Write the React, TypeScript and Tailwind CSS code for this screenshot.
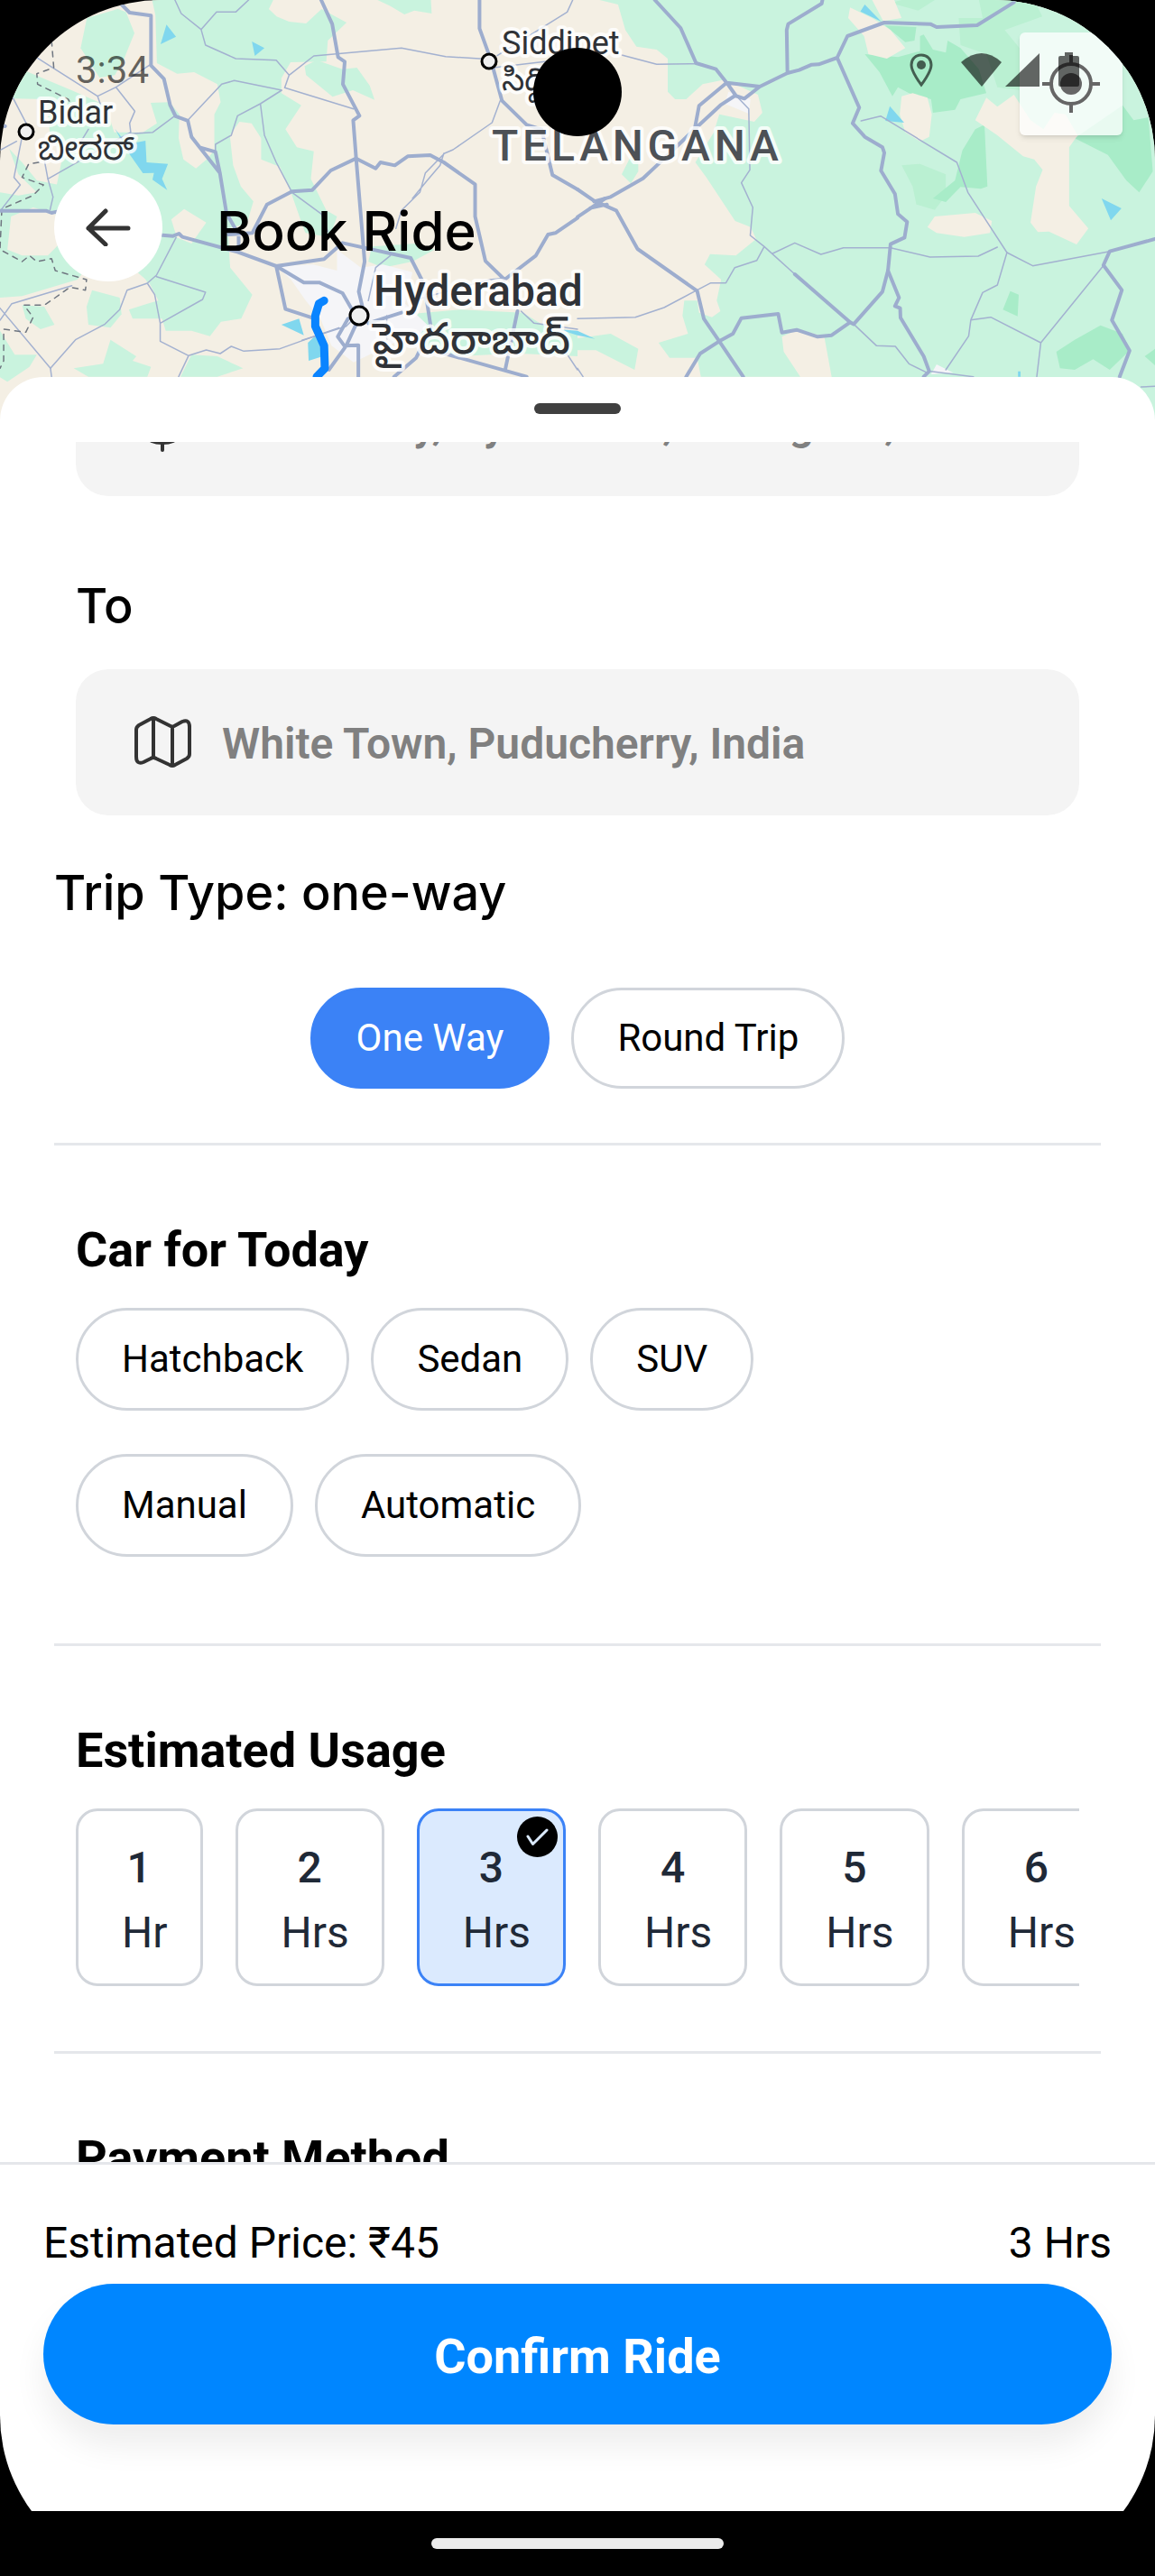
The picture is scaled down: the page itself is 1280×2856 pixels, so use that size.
import { ReactNode, useState } from "react";

const halo = "stroke-white/80 [paint-order:stroke] [stroke-width:8px] [stroke-linejoin:round]";
const indic = "font-['Noto_Sans_Kannada','Noto_Sans_Telugu','Noto_Sans',Roboto,sans-serif]";

function Fill({ d, className }: { d: string; className: string }) {
  return <path d={d} className={className} />;
}

function Road({ d, className }: { d: string; className: string }) {
  return (
    <path d={d} fill="none" strokeLinejoin="round" strokeLinecap="round" vectorEffect="non-scaling-stroke" className={className} />
  );
}

const major = "stroke-[#9dadce] [stroke-width:4px]";
const minor = "stroke-[#a3b1d0] [stroke-width:1.5px]";
const border = "stroke-[#6f7680] [stroke-width:1.5px] [stroke-dasharray:6_6]";
const green = "fill-[#c9f3de]";
const forest = "fill-[#a8ecc8]";
const water = "fill-[#80d7ee]";
const land = "fill-[#f4efe4]";
const town = "fill-[#f5f5f8]";

function WestMap() {
  return (
    <g transform="scale(0.408163 0.333333)">
      <Fill className={green} d="M236,60 L320,30 342,40 365,110 337,195 312,250 270,258 219,160Z" />
      <Fill className={green} d="M413,0 L742,0 730,30 751,55 785,72 831,78 873,30 941,75 890,135 886,205 789,207 764,260 764,310 818,350 775,430 806,490 852,503 844,595 886,700 915,720 895,790 830,775 760,660 670,745 620,760 625,890 685,980 655,1060 600,1070 570,1118 520,1100 450,1100 440,1060 360,1060 350,1030 400,1010 430,1000 405,940 340,870 250,815 190,700 150,640 170,520 135,440 127,330 34,328 67,235 194,300 287,350 310,440 388,440 426,410 409,342 460,340 487,380 485,460 498,530 532,560 561,530 582,500 582,380 599,340 590,280 527,240 481,245 426,210 422,50Z" />
      <Fill className={land} d="M650,405 L683,410 709,460 709,530 760,555 790,640 830,780 720,790 625,890 620,760 670,745 688,670 654,620 633,550 624,450Z" />
      <Fill className={green} d="M860,200 L930,230 969,225 1004,285 1017,332 958,300 903,322 831,250 827,220Z" />
      <Fill className={green} d="M25,495 L60,540 100,600 160,615 180,650 150,760 230,900 210,930 60,985 0,990 0,640 50,650 100,640 50,580Z" />
      <Fill className={land} d="M30,720 L90,690 150,710 170,800 130,850 60,850 20,830Z" />
      <Fill className={land} d="M465,730 L500,695 560,740 520,810 480,790Z" />
      <Fill className={green} d="M250,965 L325,990 330,1045 300,1090 240,1080 235,1020Z" />
      <Fill className={green} d="M60,1015 L120,1020 148,1080 110,1095 70,1060Z" />
      <Fill className={green} d="M0,1100 L40,1180 100,1180 80,1220 20,1270 0,1255Z" />
      <Fill className={green} d="M300,1130 L370,1185 360,1200 410,1220 400,1253 240,1253 200,1225 280,1210Z" />
      <Fill className={green} d="M520,1180 L590,1185 660,1225 590,1253 490,1253Z" />
      <Fill className={green} d="M380,890 L430,870 480,910 470,930 400,940Z" />
      <Fill className={green} d="M1025,0 L1170,0 1172,45 1125,35 1098,48 1060,20Z" />
      <Fill className={green} d="M1010,820 L1130,810 1180,830 1120,870 1040,890 1000,870Z" />
      <Fill className={green} d="M1110,1045 L1250,1030 1420,1040 1500,1100 1568,1110 1568,1185 1400,1175 1240,1185 1090,1130 1100,1070Z" />
      <Fill className={town} d="M915,830 L980,890 1040,880 1120,905 1100,1010 1160,1080 1130,1130 1070,1140 960,1205 900,1150 870,1060 830,1000 790,930 750,885 850,880 915,900Z" />
      <Fill className={water} d="M452,82 L478,122 436,147Z M684,138 L718,160 692,186Z M312,428 L345,480 395,468 398,540 456,545 440,595 454,632 414,598 418,575 388,576 350,510Z M764,1080 L812,1060 825,1115Z M836,1140 L870,1100 890,1180 838,1200Z M1515,1095 L1568,1100 1568,1115Z" />

      <Road className={minor} d="M475,0 L492,45 546,98 588,40 640,40 675,0 M546,98 L558,150 640,195 750,200 785,250 773,292 960,362 M785,250 L852,186 1090,160 1210,188 1330,197 M1340,225 L1480,205 M1350,185 L1540,40 1555,0" />
      <Road className={minor} d="M510,400 L602,280 636,268 765,300 707,345 645,385 628,450 585,480 585,505 M707,345 L718,450 750,540 793,640 873,712 890,770" />
      <Road className={minor} d="M98,190 L265,320 315,290 366,370 352,410 355,440 310,470 130,595 M315,290 L408,215 M265,320 L275,355 M355,445 L415,440 475,385" />
      <Road className={minor} d="M35,325 L72,412 M60,455 L38,590 55,615 5,695 M120,530 L130,595 144,655 136,697 M0,500 L45,470 M240,430 L210,490" />
      <Road className={minor} d="M478,790 L425,915 400,942 345,965 325,1030 285,1078 205,1130 137,1225 140,1253 M400,942 L420,980 435,1075 435,1135 512,1183 485,1253 M425,920 L558,972 550,996 435,1075 M512,1183 L560,1164 598,1176 628,1152 662,1168 760,1160 850,1120 920,1090" />
      <Road className={minor} d="M0,1065 L32,1010 195,950 M0,1025 L137,1225 M820,1132 L940,1085 960,1060 M1358,335 L1336,408 1230,498 1207,510 1155,575 1140,640 1090,700 1075,760 M1205,510 L1195,550 1160,600 1120,660 M1060,850 L1020,890 1000,1000" />
      <Road className={minor} d="M1415,1035 L1450,1075 1568,1095 M1530,1160 L1568,1230 M1120,1000 L1330,930 1375,925 M1050,1050 L1050,1130" />
      <Road className={border} d="M140,135 L146,225 100,245 102,280 185,330 200,360 M105,540 L78,545 60,590 118,615 90,650 5,695 0,830 60,870 80,850 100,870 140,860 150,900 235,930 232,965 190,955 150,990 120,1015 65,1015 90,1055 70,1105 10,1095 10,1200 0,1225" />

      <Road className={major} d="M330,15 L352,42 410,52 410,218 445,262 462,350 477,387 510,402 520,455 542,490 585,505 597,575 615,710 648,780 648,830 M542,490 L597,575 M620,780 L685,775 725,680 793,637 848,632 898,567 967,527 1020,560 1033,540 1072,550 1107,520 1168,516 1205,540 1290,613 1290,720 1318,868 1370,930 1455,850 1488,780 1508,775 1568,725" />
      <Road className={major} d="M872,0 L902,80 918,190 936,205 931,280 976,385 959,400 967,527 990,870 974,970 990,1050 M1302,0 L1302,95 1333,200 1363,335 1430,415 1470,430 1500,582 1568,630" />
      <Road className={major} d="M0,701 L125,701 140,708 155,704 M0,415 L14,420 M441,782 L470,785 486,777 495,788 645,838 750,885 880,862 930,808 1115,858 1145,930 1160,1010 1170,1090 1130,1190 1070,1253 M750,885 L775,1028 850,1058 M750,885 L825,940 868,940 930,975 970,1060 M1000,1075 L1090,1040 M970,1070 L940,1150 893,1230 M945,1060 L917,1120 935,1150 973,1148 973,1253 M1190,1170 L1430,1253 M1405,1035 L1372,1228" />
      <Road className="stroke-[#0a84ff] [stroke-width:9px]" d="M880,1000 L866,1010 856,1050 856,1085 880,1150 882,1225 860,1253" />
    </g>
  );
}

function EastMap() {
  return (
    <g transform="translate(640 0) scale(0.408163 0.333333)">
      <Fill className={green} d="M60,0 L1568,0 1568,1400 690,1400 690,1253 670,1120 600,1095 555,1120 560,1170 605,1253 335,1253 325,1190 250,1190 220,1140 300,1110 285,1050 290,1000 325,1000 330,1040 365,1055 388,1035 378,1000 390,930 345,880 360,845 430,850 485,795 470,755 428,735 350,590 320,540 370,440 385,380 480,405 502,375 490,315 400,265 340,280 295,330 265,330 245,305 245,195 215,165 160,155 130,100 110,15Z" />
      <Fill className={green} d="M120,580 L165,470 165,570 145,610Z M0,1125 L90,1110 165,1160 155,1230 50,1165 0,1165Z" />
      <Fill className="fill-[#baf0d2]" d="M850,10 L880,0 970,0 925,35Z M1090,0 L1240,0 1262,55 1160,100 1200,160 1200,300 1140,290 1110,180 1040,150 1035,60 1100,60Z M880,550 L930,545 1000,580 1000,650 970,698 920,680 910,620Z" />
      <Fill className={forest} d="M780,180 L870,190 930,170 930,120 940,115 965,165 1000,175 1005,135 1040,160 1090,230 1110,310 1040,330 1025,365 965,375 960,330 900,310 870,290 855,320 820,240Z M835,85 L920,90 915,135 890,140Z M1080,430 L1105,415 1113,620 1095,628 1040,622 1000,672 965,660 1025,600 1045,500Z M1350,460 L1480,350 1510,400 1550,390 1562,570 1525,640 1490,600 1440,515Z M1175,968 L1198,980 1195,1052 1155,1030Z M1300,1170 L1350,1130 1420,1082 1480,1110 1500,1165 1445,1230 1400,1195 1350,1230 1310,1225Z M1540,1185 L1568,1160 1568,1215Z" />
      <Fill className={land} d="M740,25 L800,60 850,100 890,160 840,195 790,180 778,120 735,60Z M800,0 L860,0 880,60 830,70Z M880,320 L910,310 950,325 962,380 955,455 930,470 890,440 875,380Z M1110,325 L1140,355 1185,315 1230,400 1265,430 1295,375 1325,380 1358,450 1335,490 1335,685 1387,760 1355,813 1280,770 1250,772 1230,740 1245,620 1263,565 1240,530 1210,520 1140,450 1080,400Z M970,720 L1080,708 1125,735 1120,775 1050,788 975,775 950,755Z" />
      <Fill className={town} d="M410,305 L470,330 465,378 400,345Z M975,1212 L1020,1240 960,1245Z" />
      <Fill className={water} d="M780,15 L825,72 768,38Z M848,353 L887,408 836,402Z M1423,660 L1477,693 1448,733Z M1196,1235 L1203,1235 1203,1253 1196,1253Z M0,1100 L48,1127 0,1115Z" />

      <Road className={minor} d="M120,183 L215,214 320,212 M428,315 L465,362 468,565 445,608 476,690 469,783 507,820 590,912 M507,820 L487,866 427,890 403,941 362,941 320,968 235,1023 157,1055 0,1060 M530,843 L590,808 661,846 722,824 850,824 957,855 1088,852 1140,822 M770,402 L823,386 1030,540 1060,640 1166,840 1236,884 1445,836" />
      <Road className={minor} d="M1166,840 L1140,948 1100,973 1068,1064 1062,1118 1000,1230 M1068,1064 L1122,1055 1258,1140 1427,885 M1258,1140 L1247,1253 M750,1078 L812,1150 863,1152 900,1210 950,1240 M960,1235 L1075,1253 M1530,1287 L1568,1285 M0,1225 L15,1253" />
      <Road className={major} d="M210,0 L280,93 322,210 376,230 405,275 495,288 570,243 602,233 636,215 655,214 705,192 733,120 833,75 958,80 975,90 1085,84 1185,8 M665,0 L663,12 572,80 568,100 570,243 M405,275 L330,352 318,430 M495,288 L453,328 428,318 388,350 318,430 220,545 178,593 90,655 45,670 M405,275 L430,318 M705,192 L765,358 747,410 780,455 828,490 833,508 824,568 862,645 870,712 895,738 888,790 850,812 843,900 828,970 750,1078 740,1072 590,912" />
      <Road className={major} d="M843,900 L873,990 862,1018 876,1025 877,1057 940,1185 955,1235 940,1253 M740,1072 L690,1115 652,1120 595,1097 555,1106 545,1044 445,1058 422,1110 385,1135 333,1176 295,1253 M0,630 L45,668 105,700 163,828 325,968 343,1060 385,1135 450,1253 M0,722 L75,660 M35,692 L80,680 M1568,795 L1445,836 1428,882 1478,965 1451,1065 1499,1166 1472,1253" />
    </g>
  );
}

function Pin({ x, y, r }: { x: number; y: number; r: number }) {
  return <circle cx={x} cy={y} r={r} className="fill-[#efefef] stroke-black [stroke-width:3px]" />;
}

function MapView() {
  return (
    <svg viewBox="0 0 1280 480" preserveAspectRatio="xMidYMin slice" className="block h-full w-full bg-[#f4efe4]" role="img" aria-label="Map of Telangana">
      <WestMap />
      <EastMap />
      <g className="fill-[#2f3237] font-[Roboto,sans-serif]">
        <Pin x={29} y={146} r={8} />
        <Pin x={542} y={68} r={8} />
        <Pin x={398} y={350} r={10} />
        <text x="42" y="137" className={`text-[36px] ${halo}`}>Bidar</text>
        <text x="42" y="177" className={`text-[36px] ${indic} ${halo}`}>ಬೀದರ್</text>
        <text x="556" y="60" className={`text-[36px] ${halo}`}>Siddipet</text>
        <text x="556" y="100" className={`text-[36px] ${indic} ${halo}`}>సిద్దిపేట</text>
        <text x="545" y="178" className={`fill-[#4d5156] text-[48px] font-medium tracking-widest ${halo}`}>TELANGANA</text>
        <text x="414" y="339" className={`text-[48px] font-medium ${halo}`}>Hyderabad</text>
        <text x="413" y="392" className={`text-[48px] font-medium ${indic} ${halo}`}>హైదరాబాద్</text>
      </g>
    </svg>
  );
}

function StatusBar() {
  return (
    <div className="absolute inset-x-0 top-0 z-10 flex h-[156px] items-center justify-between pr-21 pl-21 text-black/60">
      <span className="text-[42px] leading-none">3:34</span>
      <svg viewBox="0 0 192 42" className="h-[42px] w-[192px]" fill="currentColor" aria-hidden="true">
        <path d="M17 4C10 4 6 9 6 15c0 8 11 22 11 22s11-14 11-22C28 9 24 4 17 4Z" fill="none" stroke="currentColor" strokeWidth="3" />
        <circle cx="17" cy="15" r="5" />
        <path d="M61 12Q84-8 106 12L84 39Z" />
        <path d="M110 39L148 2V39Z" />
        <path d="M176 1h9v4h5q2 0 2 2v30q0 2-2 2h-19q-2 0-2-2V7q0-2 2-2h5Z" />
      </svg>
    </div>
  );
}

function MapIcon() {
  return (
    <svg viewBox="0 0 64 60" className="h-15 w-16 shrink-0" fill="none" stroke="#333" strokeWidth="4" strokeLinejoin="round" strokeLinecap="round" aria-hidden="true">
      <path d="M3 16Q3 13 6 11L19 4Q22 2 25 4L41 12Q43 13 45 12L54 7Q62 4 62 13V43Q62 46 59 48L46 55Q43 57 40 55L25 48Q22 46 19 48L11 52Q3 55 3 46ZM22 3V47M43 13V56" />
    </svg>
  );
}

function PinIcon() {
  return (
    <svg viewBox="0 0 64 64" className="h-16 w-16 shrink-0" aria-hidden="true">
      <circle cx="32" cy="14" r="12" fill="#333" />
      <ellipse cx="32" cy="48" rx="18" ry="8" fill="#333" />
      <path d="M32 20V62" stroke="#333" strokeWidth="4" strokeLinecap="round" />
    </svg>
  );
}

function PlaceBox({ icon, id, label, value }: { icon: ReactNode; id: string; label: string; value: string }) {
  return (
    <div className="mx-6 flex h-[162px] items-center gap-[34px] rounded-[36px] bg-[#f4f4f4] pr-8 pl-16">
      {icon}
      <input id={id} aria-label={label} defaultValue={value} className="min-w-0 flex-1 bg-transparent pt-1 text-[48px] leading-[58px] font-semibold text-[#808080] outline-none" />
    </div>
  );
}

function Chip({ children, selected, onClick }: { children: ReactNode; selected: boolean; onClick: () => void }) {
  return (
    <button
      type="button"
      aria-pressed={selected}
      onClick={onClick}
      className={`rounded-full border-3 px-12 text-[42px] leading-[56px] ${selected ? "border-[#3b82f6] bg-[#3b82f6] text-white" : "border-[#d1d5db] text-black"}`}
    >
      {children}
    </button>
  );
}

function HourCard({ hours, selected, onClick }: { hours: number; selected: boolean; onClick: () => void }) {
  return (
    <button
      type="button"
      aria-pressed={selected}
      onClick={onClick}
      className={`relative flex shrink-0 flex-col items-center rounded-3xl border-3 px-9 pt-[27px] pb-5 text-[48px] leading-[72px] text-[#1f2937] ${selected ? "border-[#3b82f6] bg-[#dbeafe]" : "border-[#d1d5db]"}`}
    >
      <span className="font-medium">{hours}</span>
      <span className="ml-3">{hours === 1 ? "Hr" : "Hrs"}</span>
      {selected && (
        <svg viewBox="0 0 45 45" className="absolute top-1.5 right-1.5 h-[45px] w-[45px]" aria-hidden="true">
          <circle cx="22.5" cy="22.5" r="22.5" />
          <path d="M12 22L17.500 30.500L33 15" fill="none" stroke="#dbeafe" strokeWidth="3" strokeLinecap="round" strokeLinejoin="round" />
        </svg>
      )}
    </button>
  );
}

export default function App() {
  const [trip, setTrip] = useState("One Way");
  const [car, setCar] = useState("");
  const [gear, setGear] = useState("");
  const [hours, setHours] = useState(3);

  return (
    <div className="h-screen bg-black">
      <div className="relative flex h-full flex-col overflow-hidden rounded-[178px] font-[Roboto,sans-serif] text-black">
        <header className="relative h-[480px] shrink-0">
          <MapView />
          <button type="button" aria-label="My location" className="absolute top-9 right-9 flex h-[114px] w-[114px] items-center justify-center rounded-md bg-white/75 shadow-md">
            <svg viewBox="0 0 64 64" className="h-16 w-16" fill="none" stroke="#666" strokeWidth="4" aria-hidden="true">
              <circle cx="32" cy="32" r="22" />
              <circle cx="32" cy="32" r="12" fill="#666" stroke="none" />
              <path d="M0 32H10M54 32H64M32 0V10M32 54V64" />
            </svg>
          </button>
          <StatusBar />
          <div className="absolute top-[53px] left-1/2 z-20 h-[98px] w-[98px] -translate-x-1/2 rounded-full bg-black" />
          <div className="absolute top-48 left-15 flex items-center gap-[60px]">
            <button type="button" aria-label="Back" className="flex h-30 w-30 items-center justify-center rounded-full bg-white">
              <svg viewBox="0 0 50 42" className="h-[42px] w-[50px]" fill="none" stroke="#333" strokeWidth="5" strokeLinecap="round" strokeLinejoin="round" aria-hidden="true">
                <path d="M22 3L3 22L22 40M3 22H47" />
              </svg>
            </button>
            <h1 className="pt-2 font-[Inter,sans-serif] text-[60px] leading-[72px] font-medium">Book Ride</h1>
          </div>
        </header>

        <main className="relative -mt-[62px] flex min-h-0 flex-1 flex-col rounded-t-[48px] bg-white">
          <div className="flex h-18 shrink-0 items-start justify-center pt-[29px]">
            <div className="h-3 w-24 rounded-full bg-[#404040]" />
          </div>
          <div className="min-h-0 flex-1 overflow-hidden px-15">
            <section className="-mt-[102px]">
              <PlaceBox id="from" label="From" icon={<PinIcon />} value="Hitech City, Hyderabad, Telangana, India" />
              <label htmlFor="to" className="mx-6 mt-[86px] mb-[34px] block font-[Inter,sans-serif] text-[54px] leading-[72px] font-medium">
                To
              </label>
              <PlaceBox id="to" label="To" icon={<MapIcon />} value="White Town, Puducherry, India" />
            </section>

            <section className="mt-[50px] border-b-3 border-[#e5e7eb] pb-15">
              <h2 className="font-[Inter,sans-serif] text-[54px] leading-[72px] font-medium">Trip Type: one-way</h2>
              <div className="mt-[69px] flex h-28 justify-center gap-6">
                {["One Way", "Round Trip"].map((t) => (
                  <Chip key={t} selected={trip === t} onClick={() => setTrip(t)}>{t}</Chip>
                ))}
              </div>
            </section>

            <section className="border-b-3 border-[#e5e7eb] px-6 pt-20 pb-24">
              <h2 className="text-[54px] leading-[72px] font-bold">Car for Today</h2>
              <div className="mt-7 flex h-[114px] gap-6">
                {["Hatchback", "Sedan", "SUV"].map((t) => (
                  <Chip key={t} selected={car === t} onClick={() => setCar(t)}>{t}</Chip>
                ))}
              </div>
              <div className="mt-12 flex h-[114px] gap-6">
                {["Manual", "Automatic"].map((t) => (
                  <Chip key={t} selected={gear === t} onClick={() => setGear(t)}>{t}</Chip>
                ))}
              </div>
            </section>

            <section className="border-b-3 border-[#e5e7eb] px-6 pt-20 pb-18">
              <h2 className="text-[54px] leading-[72px] font-bold">Estimated Usage</h2>
              <div className="mt-7 flex gap-9 overflow-hidden">
                {[1, 2, 3, 4, 5, 6].map((n) => (
                  <HourCard key={n} hours={n} selected={hours === n} onClick={() => setHours(n)} />
                ))}
              </div>
            </section>

            <section className="px-6 pt-20">
              <h2 className="text-[54px] leading-[72px] font-bold">Payment Method</h2>
            </section>
          </div>
        </main>

        <footer className="shrink-0 border-t-3 border-[#e5e7eb] bg-white px-12 pt-[51px] pb-24">
          <div className="mb-[9px] flex justify-between text-[48px] leading-[72px]">
            <span>Estimated Price: ₹45</span>
            <span>{hours} {hours === 1 ? "Hr" : "Hrs"}</span>
          </div>
          <button type="button" className="w-full rounded-full bg-[#0086ff] pt-[45px] pb-[39px] text-[54px] leading-[72px] font-bold text-white shadow-[0_24px_36px_rgba(0,0,0,0.07)]">
            Confirm Ride
          </button>
        </footer>
        <div className="flex h-18 shrink-0 items-center justify-center bg-black">
          <div className="h-3 w-[324px] rounded-full bg-[#ebebeb]" />
        </div>
      </div>
    </div>
  );
}
